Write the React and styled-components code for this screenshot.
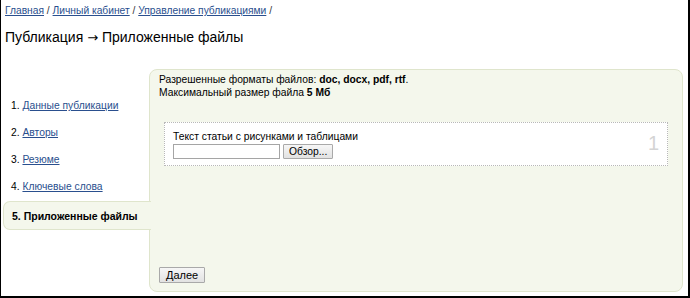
import React from "react";
import styled, { createGlobalStyle } from "styled-components";

const Global = createGlobalStyle`
  html, body { margin: 0; padding: 0; background: #fff; }
  body { font-family: Arial, "Liberation Sans", sans-serif; color: #000; }
`;

const Frame = styled.div`
  box-sizing: border-box;
  width: 690px;
  height: 298px;
  border-left: 1px solid #000;
  border-right: 2px solid #000;
  border-bottom: 2px solid #000;
  display: flex;
  flex-direction: column;
  overflow: hidden;
`;

const Crumbs = styled.div`
  font-size: 10.25px;
  line-height: 14px;
  padding: 4px 0 0 4px;
  color: #333;
`;

const CrumbLink = styled.a`
  color: #2a4f8e;
  text-decoration: underline;
`;

const Title = styled.h1`
  margin: 9px 0 0 4px;
  font-size: 14px;
  font-weight: normal;
  line-height: 20px;
`;

const Arrow = styled.span`
  font-family: "DejaVu Sans", sans-serif;
  font-size: 13px;
`;

const Main = styled.div`
  display: flex;
  margin-top: 21px;
  padding-right: 5px;
  flex: 1;
  margin-bottom: 4px;
`;

const Nav = styled.ul`
  list-style: none;
  margin: 0;
  padding: 30px 0 0 2px;
  width: 146px;
  flex: none;
  position: relative;
  z-index: 1;
`;

const NavItem = styled.li`
  font-size: ${(p) => (p.$active ? "10.5px" : "10.3px")};
  line-height: 14px;
  height: 14px;
  padding: ${(p) => (p.$active ? "7px 0 6px 8px" : "0 0 0 8px")};
  margin-bottom: ${(p) => (p.$active ? "0" : "13px")};
  margin-top: ${(p) => (p.$active ? "-6px" : "0")};
  font-weight: ${(p) => (p.$active ? "bold" : "normal")};
  ${(p) =>
    p.$active &&
    `
    background: #f4f7ec;
    border: 1px solid #dfe5cc;
    border-right: none;
    border-radius: 7px 0 0 7px;
    margin-right: -2px;
  `}
`;

const NavLink = styled.a`
  color: #2a4f8e;
  text-decoration: underline;
`;

const Panel = styled.div`
  flex: 1;
  box-sizing: border-box;
  background: #f4f7ec;
  border: 1px solid #dfe5cc;
  border-radius: 8px;
  padding: 3px 14px 8px 9px;
  display: flex;
  flex-direction: column;
  font-size: 10.3px;
  line-height: 13px;
`;

const Note = styled.p`
  margin: 0;
`;

const FileBox = styled.div`
  margin: 23px 0 0 5px;
  background: #fff;
  border: 1px dotted #b8b8b8;
  height: 44px;
  box-sizing: border-box;
  padding: 7px 8px 0 8px;
  position: relative;
`;

const FileLabel = styled.div`
  font-size: 10.3px;
  line-height: 13px;
`;

const FileRow = styled.div`
  display: flex;
  gap: 3px;
  margin-top: 1px;
`;

const TextInput = styled.div`
  width: 107px;
  height: 15px;
  box-sizing: border-box;
  border: 1px solid #a5a5a5;
  background: #fff;
`;

const Btn = styled.button`
  font-family: Arial, "Liberation Sans", sans-serif;
  font-size: ${(p) => p.$fs || "10.3px"};
  line-height: 13px;
  height: ${(p) => p.$h || 15}px;
  padding: 0 ${(p) => p.$px || 5}px;
  border: 1px solid #a9a9a9;
  background: linear-gradient(#f6f6f6, #e2e2e2);
  color: #000;
  border-radius: 1px;
`;

const Counter = styled.span`
  position: absolute;
  right: 8px;
  top: 10px;
  font-size: 20px;
  line-height: 20px;
  color: #d4d4d4;
`;

const Footer = styled.div`
  margin-top: auto;
`;

export default function App() {
  return (
    <>
      <Global />
      <Frame>
        <Crumbs>
          <CrumbLink href="#">Главная</CrumbLink> / <CrumbLink href="#">Личный кабинет</CrumbLink> /{" "}
          <CrumbLink href="#">Управление публикациями</CrumbLink> /
        </Crumbs>
        <Title>
          Публикация <Arrow>→</Arrow> Приложенные файлы
        </Title>
        <Main>
          <Nav>
            <NavItem>
              1. <NavLink href="#">Данные публикации</NavLink>
            </NavItem>
            <NavItem>
              2. <NavLink href="#">Авторы</NavLink>
            </NavItem>
            <NavItem>
              3. <NavLink href="#">Резюме</NavLink>
            </NavItem>
            <NavItem>
              4. <NavLink href="#">Ключевые слова</NavLink>
            </NavItem>
            <NavItem $active>5. Приложенные файлы</NavItem>
          </Nav>
          <Panel>
            <Note>
              Разрешенные форматы файлов: <b>doc, docx, pdf, rtf</b>.
            </Note>
            <Note>
              Максимальный размер файла <b>5 Мб</b>
            </Note>
            <FileBox>
              <FileLabel>Текст статьи с рисунками и таблицами</FileLabel>
              <FileRow>
                <TextInput />
                <Btn>Обзор...</Btn>
              </FileRow>
              <Counter>1</Counter>
            </FileBox>
            <Footer>
              <Btn $h={16} $px={6} $fs="11px">Далее</Btn>
            </Footer>
          </Panel>
        </Main>
      </Frame>
    </>
  );
}
